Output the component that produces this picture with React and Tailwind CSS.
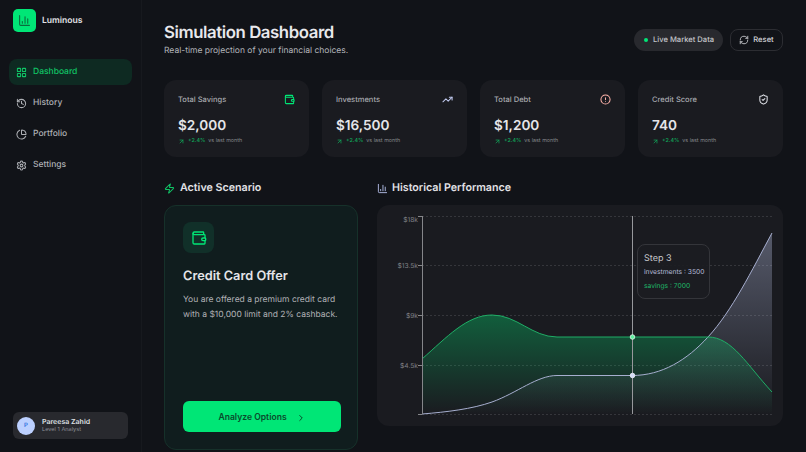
import { LayoutGrid, History, PieChart, Settings, Wallet, TrendingUp, CircleAlert, ShieldCheck, ArrowUpRight, RefreshCw, Zap, ChevronRight, ChartColumn } from 'lucide-react';

const NAV = [
  { label: 'Dashboard', icon: LayoutGrid, active: true },
  { label: 'History', icon: History },
  { label: 'Portfolio', icon: PieChart },
  { label: 'Settings', icon: Settings },
];

const STATS = [
  { label: 'Total Savings', value: '$2,000', icon: Wallet, color: 'text-[#00e676]' },
  { label: 'Investments', value: '$16,500', icon: TrendingUp, color: 'text-[#c0c9ee]' },
  { label: 'Total Debt', value: '$1,200', icon: CircleAlert, color: 'text-[#ffb4ab]' },
  { label: 'Credit Score', value: '740', icon: ShieldCheck, color: 'text-[#e2e4ea]' },
];

const TICKS = [
  { label: '$18k', y: 11.5, dy: 5 },
  { label: '$13.5k', y: 60.5, dy: 2.5 },
  { label: '$9k', y: 110.5, dy: 2.5 },
  { label: '$4.5k', y: 160.5, dy: 2.5 },
  { label: '', y: 209.5, dy: 0 },
];

// chart coordinates are relative to the card's top left corner
const SAVINGS = 'M45 154 C70 132 90 110 115 110 C140 110 155 132 180 132 L331 132 C355 132 370 160 395 187';
const INVEST = 'M45 209 C70 207 95 204 115 197 C140 188 160 170.5 180 170.5 L255 170.5 C285 170.5 310 155 331 132 C355 106 375 65 395 28';

function Chart() {
  return (
    <div className="relative h-[221px] rounded-xl bg-[#1a1b20]">
      <svg width="406" height="221" viewBox="0 0 406 221" className="block">
        <defs>
          <linearGradient id="green" x1="0" y1="110" x2="0" y2="209" gradientUnits="userSpaceOnUse">
            <stop offset="0" stopColor="#00e676" stopOpacity="0.33" />
            <stop offset="1" stopColor="#00e676" stopOpacity="0" />
          </linearGradient>
          <linearGradient id="blue" x1="0" y1="28" x2="0" y2="209" gradientUnits="userSpaceOnUse">
            <stop offset="0" stopColor="#c0c9ee" stopOpacity="0.36" />
            <stop offset="1" stopColor="#c0c9ee" stopOpacity="0" />
          </linearGradient>
        </defs>
        {TICKS.map(t => (
          <g key={t.y}>
            <line x1="45" x2="395" y1={t.y} y2={t.y} stroke="#35363b" strokeWidth="1" strokeDasharray="2 2" />
            <line x1="41" x2="45" y1={t.y} y2={t.y} stroke="#85868a" strokeWidth="1" />
            <text x="41" y={t.y + t.dy} textAnchor="end" fontSize="6.7" fill="#808186">{t.label}</text>
          </g>
        ))}
        <path d={`${INVEST} L395 209 L45 209 Z`} fill="url(#blue)" />
        <path d={`${SAVINGS} L395 209 L45 209 Z`} fill="url(#green)" />
        <path d={INVEST} fill="none" stroke="#a6aecf" strokeWidth="1" />
        <path d={SAVINGS} fill="none" stroke="#1fae66" strokeWidth="1" />
        <line x1="45.5" x2="45.5" y1="11" y2="209" stroke="#85868a" strokeWidth="1" />
        <line x1="255.5" x2="255.5" y1="11" y2="209" stroke="#97989c" strokeWidth="1" />
        <circle cx="255.5" cy="132" r="2.3" fill="#5ff0a0" stroke="#e8f5ee" strokeWidth="0.8" />
        <circle cx="255.5" cy="170.5" r="2.3" fill="#d5dcf8" stroke="#eef0fa" strokeWidth="0.8" />
      </svg>
      <div className="absolute left-[260px] top-[39px] h-[55px] w-[73px] rounded-lg border border-[#34353a] bg-[#1c1d21]/90 pl-[6px] pt-[7px]">
        <div className="text-[9px] leading-[13px] text-[#c6c7cb]">Step 3</div>
        <div className="mt-[3px] text-[6.7px] leading-[9px] text-[#b4bbd8]">investments : 3500</div>
        <div className="mt-[5px] text-[6.7px] leading-[9px] text-[#1fb869]">savings : 7000</div>
      </div>
    </div>
  );
}

export default function App() {
  return (
    <div className="flex h-[452px] w-[806px] overflow-hidden bg-[#111318] font-['Inter',sans-serif] text-[#e2e2e6] [text-rendering:geometricPrecision]">
      {/* Sidebar */}
      <aside className="flex w-[142px] shrink-0 flex-col border-r border-[#17191e] px-[9px] pb-[13px] pt-[9px]">
        <div className="flex items-center gap-[6px] pl-[4px]">
          <div className="flex h-[23px] w-[23px] items-center justify-center rounded-[5px] bg-[#00e676]">
            <ChartColumn size={13} className="text-[#0a6b3d]" />
          </div>
          <span className="pt-[2px] text-[8.6px] font-semibold text-[#e2e2e6]">Luminous</span>
        </div>
        <nav className="mt-[27px] flex flex-col gap-[5px]">
          {NAV.map(n => (
            <div key={n.label} className={`flex h-[26px] items-center gap-[6px] rounded-lg pl-[7px] text-[8.5px] font-medium ${n.active ? 'bg-[#0e2a22] text-[#10c566]' : 'text-[#aeb0b5]'}`}>
              <n.icon size={11} strokeWidth={2.2} />
              <span>{n.label}</span>
            </div>
          ))}
        </nav>
        <div className="mx-[4px] mt-auto flex h-[27px] items-center gap-[7px] rounded-md bg-[#28292e] pl-[4px]">
          <div className="flex h-[18px] w-[18px] items-center justify-center rounded-full bg-[#bcd0ff] text-[6px] font-semibold text-[#2f6fe0]">P</div>
          <div>
            <div className="text-[7px] font-semibold leading-[9px] text-[#dfe0e4]">Pareesa Zahid</div>
            <div className="mt-[1px] text-[5.6px] leading-[7px] text-[#8e9096]">Level 1 Analyst</div>
          </div>
        </div>
      </aside>

      {/* Main */}
      <main className="flex-1 pl-[22px] pr-[23px] pt-[22px]">
        <header className="flex h-[37px] items-start justify-between">
          <div>
            <h1 className="text-[16.8px] font-semibold leading-[22px] tracking-tight text-[#e8e8ec]">Simulation Dashboard</h1>
            <p className="text-[8.5px] leading-[14px] text-[#b4b6bb]">Real-time projection of your financial choices.</p>
          </div>
          <div className="mt-[7px] flex items-center gap-[7px]">
            <div className="flex h-[22px] w-[89px] items-center gap-[5px] rounded-full bg-[#28292e] pl-[10px] text-[7.6px] font-medium text-[#c4c6cb]">
              <span className="h-[4px] w-[4px] rounded-full bg-[#00e676]" />
              Live Market Data
            </div>
            <div className="flex h-[22px] w-[53px] items-center justify-center gap-[4px] rounded-lg border border-[#2c2d32] text-[7.6px] font-medium text-[#d3d4d8]">
              <RefreshCw size={10} />
              Reset
            </div>
          </div>
        </header>

        <section className="mt-[21px] grid grid-cols-4 gap-[13px]">
          {STATS.map(s => (
            <div key={s.label} className="h-[77px] rounded-xl bg-[#1a1b20] px-[14px] pt-[13px]">
              <div className="flex items-center justify-between">
                <span className="pt-[1px] text-[7.55px] font-medium leading-[12px] text-[#a8aaaf]">{s.label}</span>
                <s.icon size={11} strokeWidth={2.2} className={s.color} />
              </div>
              <div className="mt-[11px] text-[13.6px] font-semibold leading-[18px] text-[#e5e5e9]">{s.value}</div>
              <div className="mt-[2px] flex items-center gap-[3px] text-[5.4px] leading-[8px]">
                <ArrowUpRight size={7} strokeWidth={2.5} className="text-[#10a85a]" />
                <span className="font-medium text-[#10a85a]">+2.4%</span>
                <span className="text-[#85878c]">vs last month</span>
              </div>
            </div>
          ))}
        </section>

        <section className="mt-[22px] flex gap-[19px]">
          <div className="w-[194px] shrink-0">
            <h2 className="flex h-[18px] items-center gap-[5px] text-[10.7px] font-semibold text-[#e2e2e6]">
              <Zap size={11} strokeWidth={2.2} className="text-[#10c566]" />
              Active Scenario
            </h2>
            <div className="mt-[8px] flex h-[245px] flex-col rounded-xl border border-[#16312a] bg-[#101d1e] pb-[17px] pl-[18px] pr-[16px] pt-[16px]">
              <div className="flex h-[31px] w-[31px] items-center justify-center rounded-lg bg-[#113029]">
                <Wallet size={16} className="text-[#00e676]" />
              </div>
              <h3 className="mt-[15px] text-[12.75px] font-semibold leading-[18px] text-[#e5e5e9]">Credit Card Offer</h3>
              <p className="mt-[7px] text-[8.5px] leading-[14.5px] text-[#b0b2b6]">You are offered a premium credit card with a $10,000 limit and 2% cashback.</p>
              <button className="mt-auto flex h-[31px] items-center justify-center gap-[9px] rounded-md bg-[#00e676] pt-[2px] text-[8.6px] font-semibold text-[#0a4a2c]">
                Analyze Options
                <ChevronRight size={10} strokeWidth={2.4} />
              </button>
            </div>
          </div>
          <div className="flex-1">
            <h2 className="flex h-[18px] items-center gap-[4px] text-[10.7px] font-semibold text-[#e2e2e6]">
              <ChartColumn size={11} className="text-[#b4bee8]" />
              Historical Performance
            </h2>
            <div className="mt-[8px]">
              <Chart />
            </div>
          </div>
        </section>
      </main>
    </div>
  );
}
